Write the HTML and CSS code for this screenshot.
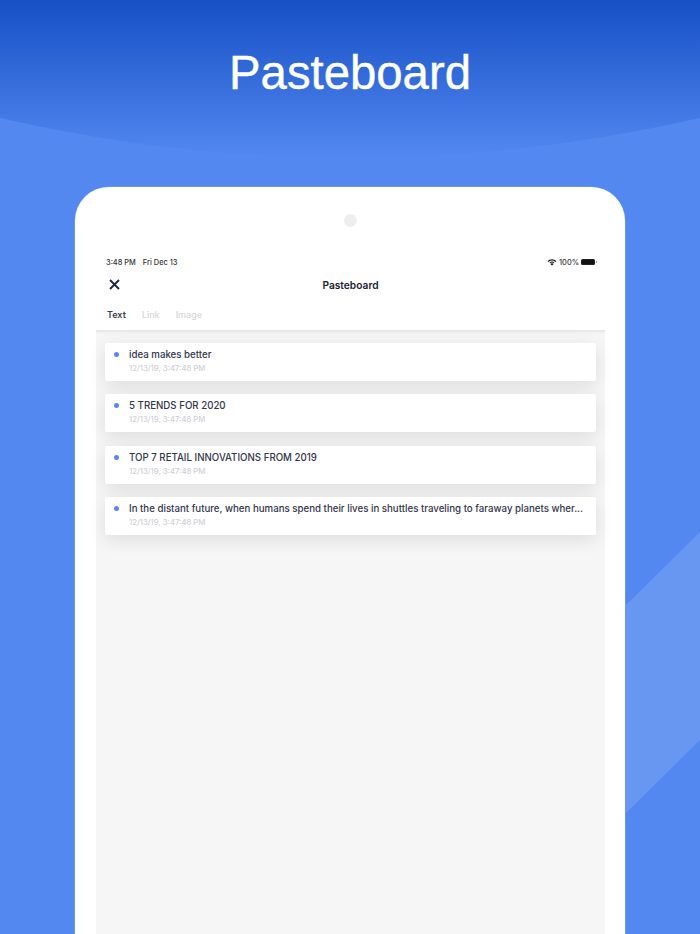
FILE: index.html
```html
<!DOCTYPE html>
<html lang="en">
<head>
<meta charset="utf-8">
<title>Pasteboard</title>
<link rel="stylesheet" href="styles.css">
</head>
<body>
<div class="stage">
  <svg class="backdrop" width="700" height="934" viewBox="0 0 700 934" aria-hidden="true">
    <defs>
      <linearGradient id="sky" x1="0" y1="0" x2="0" y2="1">
        <stop offset="0" stop-color="#1650c5"/>
        <stop offset="1" stop-color="#5388f0"/>
      </linearGradient>
    </defs>
    <path d="M0 0H700V118Q350 198 0 118Z" fill="url(#sky)" class="sky"/>
    <path d="M626 605L700 532V740L626 813Z" fill="#6897f1"/>
  </svg>
  <h1 class="headline">Pasteboard</h1>
  <div class="device">
    <div class="camera"></div>
    <div class="screen">
      <div class="statusbar">
        <span class="clock">3:48 PM<span class="date">Fri Dec 13</span></span>
        <span class="status-right">
          <svg width="10" height="8" viewBox="0 0 10 8"><path d="M5 7.6L3.4 5.9A2.3 2.3 0 0 1 6.6 5.9Z" fill="#111"/><path d="M2.5 5A3.6 3.6 0 0 1 7.5 5L6.9 5.6A3 3 0 0 0 3.1 5.6Z" fill="#111" transform="translate(0 -.3)"/><path d="M.6 3.1A6.2 6.2 0 0 1 9.4 3.1L8.4 4A4.8 4.8 0 0 0 1.6 4Z" fill="#111"/></svg>
          <span>100%</span>
          <span class="battery"><span class="battery-fill"></span></span>
        </span>
      </div>
      <div class="navbar">
        <svg class="close" width="11" height="11" viewBox="0 0 11 11"><path d="M1 1L10 10M10 1L1 10" stroke="#22273f" stroke-width="1.9" fill="none"/></svg>
        <span class="nav-title">Pasteboard</span>
      </div>
      <div class="tabs">
        <span class="tab active">Text</span>
        <span class="tab">Link</span>
        <span class="tab">Image</span>
      </div>
      <div class="list">
        <div class="row">
          <span class="dot"></span>
          <div class="row-body"><div class="row-title">idea makes better</div><div class="row-date">12/13/19, 3:47:48 PM</div></div>
        </div>
        <div class="row">
          <span class="dot"></span>
          <div class="row-body"><div class="row-title">5 TRENDS FOR 2020</div><div class="row-date">12/13/19, 3:47:48 PM</div></div>
        </div>
        <div class="row">
          <span class="dot"></span>
          <div class="row-body"><div class="row-title">TOP 7 RETAIL INNOVATIONS FROM 2019</div><div class="row-date">12/13/19, 3:47:48 PM</div></div>
        </div>
        <div class="row">
          <span class="dot"></span>
          <div class="row-body"><div class="row-title">In the distant future, when humans spend their lives in shuttles traveling to faraway planets wher...</div><div class="row-date">12/13/19, 3:47:48 PM</div></div>
        </div>
      </div>
    </div>
  </div>
</div>
</body>
</html>
```
FILE: styles.css
```css
* { box-sizing: border-box; }
html, body { margin: 0; padding: 0; }
body { font-family: Inter, "Liberation Sans", sans-serif; background: #5388f0; }
.stage {
  position: relative;
  width: 700px;
  height: 934px;
  overflow: hidden;
  background: #5388f0;
  display: flex;
  flex-direction: column;
  align-items: center;
}
.backdrop { position: absolute; left: 0; top: 0; }
.headline {
  position: relative;
  margin: 46px 0 0;
  height: 54px;
  font: 400 47.3px/54px "Liberation Sans", Arial, sans-serif;
  -webkit-text-stroke: .4px #fff;
  color: #fff;
  text-align: center;
}
.device {
  position: relative;
  margin-top: 87px;
  width: 550px;
  flex: 1;
  padding: 0 20px 0 21px;
  background: #fff;
  border-radius: 34px 34px 0 0;
  box-shadow: 0 0 0 .3px rgba(255,255,255,.45);
  display: flex;
  flex-direction: column;
}
.camera {
  position: absolute;
  left: 268.5px;
  top: 27px;
  width: 13px;
  height: 13px;
  border-radius: 50%;
  background: #eeeeee;
}
.screen {
  margin-top: 67px;
  flex: 1;
  display: flex;
  flex-direction: column;
  min-height: 0;
}
.statusbar {
  height: 16px;
  padding: 0 10px;
  display: flex;
  justify-content: space-between;
  align-items: center;
  font-size: 7.4px;
  font-weight: 500;
  color: #333;
}
.date { margin-left: 7px; }
.status-right { display: flex; align-items: center; gap: 2px; }
.battery {
  width: 14px;
  height: 6px;
  padding: 1px;
  border-radius: 1.5px;
  background: #222;
  position: relative;
  display: block;
}
.battery::after {
  content: "";
  position: absolute;
  right: -1.5px;
  top: 2px;
  width: 1px;
  height: 2px;
  background: #999;
}
.battery-fill { display: block; height: 100%; background: #111; }
.navbar {
  position: relative;
  height: 30px;
  display: flex;
  align-items: center;
  justify-content: center;
}
.close { position: absolute; left: 13px; top: 9px; }
.nav-title { font-size: 10.2px; font-weight: 600; color: #1b1e2e; }
.tabs {
  height: 30px;
  padding: 0 11px 2px;
  display: flex;
  align-items: center;
  gap: 16px;
  font-size: 9px;
}
.tab { color: #d6d7dc; font-weight: 500; }
.tab.active { color: #3a3d50; font-weight: 600; }
.list {
  flex: 1;
  background: #f6f6f6;
  padding: 13px 9px 0;
  display: flex;
  flex-direction: column;
  gap: 13.3px;
  box-shadow: inset 0 4px 3px -2px rgba(0,0,0,.07);
}
.row {
  height: 38px;
  background: #fff;
  border-radius: 2px;
  box-shadow: 0 5px 18px rgba(0,0,0,.1);
  display: flex;
  padding: 5px 13px 0 9px;
}
.dot {
  width: 5px;
  height: 5px;
  margin-top: 4px;
  border-radius: 50%;
  background: #5c86ee;
  flex: none;
}
.row-body { margin-left: 10px; min-width: 0; flex: 1; }
.row-title {
  font-size: 9.7px;
  line-height: 13px;
  font-weight: 500;
  color: #33364a;
  white-space: nowrap;
}
.row-date {
  margin-top: 2px;
  font-size: 7.7px;
  line-height: 11px;
  font-weight: 500;
  color: #cfd0d6;
}
```
